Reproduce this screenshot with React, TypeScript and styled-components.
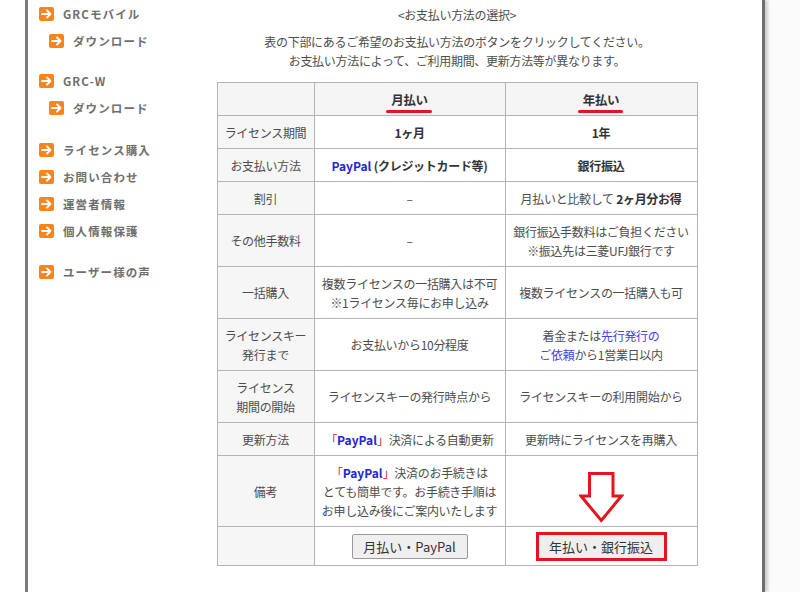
import React from 'react';
import styled, { createGlobalStyle } from 'styled-components';

const GlobalStyle = createGlobalStyle`
  html, body {
    margin: 0;
    padding: 0;
    background: #fbfbfb;
  }
  body {
    font-family: "Noto Sans CJK JP", "Noto Sans", sans-serif;
    color: #4d4d4d;
  }
`;

const Page = styled.div`
  height: 592px;
  overflow: hidden;
  background: linear-gradient(to right, #ffffff 0 25px, #fbfbfb 25px);
`;

const Frame = styled.div`
  margin-left: 25px;
  width: 734px;
  height: 592px;
  background: #ffffff;
  border-left: 3px solid #7b7b7b;
  border-right: 3px solid #6e6e6e;
  box-shadow: 3px 0 3px rgba(0, 0, 0, 0.18);
  display: flex;
`;

const Sidebar = styled.nav`
  width: 172px;
  flex-shrink: 0;
  display: flex;
  flex-direction: column;
`;

const NavGroup = styled.div<{ $gap: number }>`
  margin-top: ${p => p.$gap}px;
  display: flex;
  flex-direction: column;
`;

const NavItem = styled.div<{ $indent?: boolean }>`
  height: 27px;
  display: flex;
  align-items: center;
  gap: 9px;
  padding-left: ${p => (p.$indent ? 21 : 11)}px;
  font-size: 11.5px;
  font-weight: 700;
  letter-spacing: 1.1px;
  color: #6e6e6e;
`;

const Icon = styled.span`
  width: 15px;
  height: 14px;
  border-radius: 2px;
  background: #f7851c;
  display: inline-flex;
  align-items: center;
  justify-content: center;
  flex-shrink: 0;
`;

const Main = styled.main`
  width: 514px;
  padding-top: 5px;
  display: flex;
  flex-direction: column;
  align-items: center;
  font-size: 12px;
  line-height: 19px;
  letter-spacing: -0.3px;
`;

const Title = styled.div`
  margin-bottom: 8px;
`;

const Lead = styled.div`
  text-align: center;
  margin-bottom: 12px;
`;

const Table = styled.table`
  width: 481px;
  border-collapse: collapse;
  table-layout: fixed;
`;

const HeadCell = styled.th<{ $w?: number }>`
  ${p => (p.$w ? `width: ${p.$w}px;` : '')}
  background: #f5f5f5;
  border: 1px solid #b4b4b4;
  padding: 6.5px 4px;
  font-size: 12.5px;
  font-weight: 700;
  color: #333;
`;

const Label = styled.td`
  background: #f6f6f6;
  border: 1px solid #b4b4b4;
  padding: 6.5px 4px;
  text-align: center;
  vertical-align: middle;
`;

const Cell = styled.td<{ $bottom?: boolean }>`
  border: 1px solid #b4b4b4;
  padding: ${p => (p.$bottom ? '6.5px 4px 3px' : '6.5px 4px')};
  text-align: center;
  vertical-align: ${p => (p.$bottom ? 'bottom' : 'middle')};
  white-space: nowrap;
`;

const Marked = styled.span`
  position: relative;
  display: inline-block;
  &::after {
    content: '';
    position: absolute;
    left: -5px;
    right: -4px;
    bottom: -4px;
    height: 3px;
    border-radius: 2px;
    background: #e5141d;
  }
`;

const Strong = styled.b`
  font-weight: 700;
  color: #333;
`;

const Pay = styled.b`
  font-weight: 700;
  color: #2626d9;
  letter-spacing: 0;
`;

const Bracket = styled.span`
  color: #e0262c;
`;

const Link = styled.span`
  color: #4141ee;
`;

const Button = styled.button<{ $w: number; $marked?: boolean }>`
  width: ${p => p.$w}px;
  height: ${p => (p.$marked ? 23 : 25)}px;
  padding: 0;
  font-family: inherit;
  font-size: 13px;
  color: #333;
  background: #efefef;
  border: 1px solid #9a9a9a;
  border-radius: ${p => (p.$marked ? 0 : 2)}px;
  vertical-align: middle;
  ${p => (p.$marked ? 'outline: 3px solid #e5141d; border-color: #efefef;' : '')}
`;

const Arrow = styled.svg`
  display: block;
  margin: 0 auto;
`;

const ArrowIcon = () => (
  <Icon>
    <svg width="11" height="10" viewBox="0 0 11 10">
      <path d="M1 5 H9.5 M6 1.5 L9.5 5 L6 8.5" stroke="#fff" strokeWidth="1.8" fill="none" strokeLinecap="round" strokeLinejoin="round" />
    </svg>
  </Icon>
);

const nav: { gap: number; items: { label: string; indent?: boolean }[] }[] = [
  { gap: 0, items: [{ label: 'GRCモバイル' }, { label: 'ダウンロード', indent: true }] },
  { gap: 13, items: [{ label: 'GRC-W' }, { label: 'ダウンロード', indent: true }] },
  { gap: 15, items: [{ label: 'ライセンス購入' }, { label: 'お問い合わせ' }, { label: '運営者情報' }, { label: '個人情報保護' }] },
  { gap: 14, items: [{ label: 'ユーザー様の声' }] },
];

const PayPalTag = () => (
  <>
    <Bracket>「</Bracket>
    <Pay>PayPal</Pay>
    <Bracket>」</Bracket>
  </>
);

const App = () => (
  <Page>
    <GlobalStyle />
    <Frame>
      <Sidebar>
        {nav.map((g, gi) => (
          <NavGroup key={gi} $gap={g.gap}>
            {g.items.map((it, i) => (
              <NavItem key={i} $indent={it.indent}>
                <ArrowIcon />
                {it.label}
              </NavItem>
            ))}
          </NavGroup>
        ))}
      </Sidebar>
      <Main>
        <Title>&lt;お支払い方法の選択&gt;</Title>
        <Lead>
          表の下部にあるご希望のお支払い方法のボタンをクリックしてください。
          <br />
          お支払い方法によって、ご利用期間、更新方法等が異なります。
        </Lead>
        <Table>
          <thead>
            <tr>
              <HeadCell $w={88} />
              <HeadCell $w={182}>
                <Marked>月払い</Marked>
              </HeadCell>
              <HeadCell>
                <Marked>年払い</Marked>
              </HeadCell>
            </tr>
          </thead>
          <tbody>
            <tr>
              <Label>ライセンス期間</Label>
              <Cell><Strong>1ヶ月</Strong></Cell>
              <Cell><Strong>1年</Strong></Cell>
            </tr>
            <tr>
              <Label>お支払い方法</Label>
              <Cell><Pay>PayPal</Pay> <Strong>(クレジットカード等)</Strong></Cell>
              <Cell><Strong>銀行振込</Strong></Cell>
            </tr>
            <tr>
              <Label>割引</Label>
              <Cell>–</Cell>
              <Cell>月払いと比較して <Strong>2ヶ月分お得</Strong></Cell>
            </tr>
            <tr>
              <Label>その他手数料</Label>
              <Cell>–</Cell>
              <Cell>
                銀行振込手数料はご負担ください
                <br />
                ※振込先は三菱UFJ銀行です
              </Cell>
            </tr>
            <tr>
              <Label>一括購入</Label>
              <Cell>
                複数ライセンスの一括購入は不可
                <br />
                ※1ライセンス毎にお申し込み
              </Cell>
              <Cell>複数ライセンスの一括購入も可</Cell>
            </tr>
            <tr>
              <Label>
                ライセンスキー
                <br />
                発行まで
              </Label>
              <Cell>お支払いから10分程度</Cell>
              <Cell>
                着金または<Link>先行発行の</Link>
                <br />
                <Link>ご依頼</Link>から1営業日以内
              </Cell>
            </tr>
            <tr>
              <Label>
                ライセンス
                <br />
                期間の開始
              </Label>
              <Cell>ライセンスキーの発行時点から</Cell>
              <Cell>ライセンスキーの利用開始から</Cell>
            </tr>
            <tr>
              <Label>更新方法</Label>
              <Cell><PayPalTag />決済による自動更新</Cell>
              <Cell>更新時にライセンスを再購入</Cell>
            </tr>
            <tr>
              <Label>備考</Label>
              <Cell>
                <PayPalTag />決済のお手続きは
                <br />
                とても簡単です。お手続き手順は
                <br />
                お申し込み後にご案内いたします
              </Cell>
              <Cell $bottom>
                <Arrow width="45" height="51" viewBox="0 0 45 51">
                  <polygon
                    points="10.5,1.5 34,1.5 34,24 42.5,24 22.3,48.5 2,24 10.5,24"
                    fill="#fff"
                    stroke="#e5141d"
                    strokeWidth="3"
                  />
                </Arrow>
              </Cell>
            </tr>
            <tr>
              <Label />
              <Cell>
                <Button $w={116}>月払い・PayPal</Button>
              </Cell>
              <Cell>
                <Button $w={125} $marked>年払い・銀行振込</Button>
              </Cell>
            </tr>
          </tbody>
        </Table>
      </Main>
    </Frame>
  </Page>
);

export default App;
